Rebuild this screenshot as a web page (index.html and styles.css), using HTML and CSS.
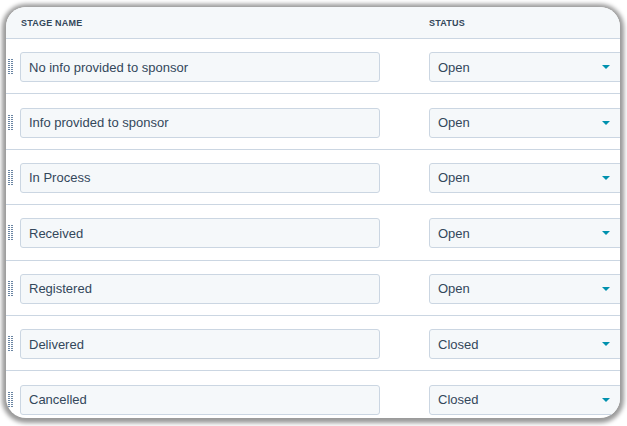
FILE: index.html
```html
<!DOCTYPE html>
<html lang="en">
<head>
  <meta charset="UTF-8" />
  <title>Pipeline stages</title>
  <link rel="stylesheet" href="styles.css">
</head>
<body>

<div class="card">
  <div class="head">
    <div class="col-name">Stage name</div>
    <div class="col-status">Status</div>
  </div>

  <div class="row">
    <span class="grip"></span>
    <div class="field">No info provided to sponsor</div>
    <div class="select">Open<span class="caret"></span></div>
  </div>
  <div class="row">
    <span class="grip"></span>
    <div class="field">Info provided to sponsor</div>
    <div class="select">Open<span class="caret"></span></div>
  </div>
  <div class="row">
    <span class="grip"></span>
    <div class="field">In Process</div>
    <div class="select">Open<span class="caret"></span></div>
  </div>
  <div class="row">
    <span class="grip"></span>
    <div class="field">Received</div>
    <div class="select">Open<span class="caret"></span></div>
  </div>
  <div class="row">
    <span class="grip"></span>
    <div class="field">Registered</div>
    <div class="select">Open<span class="caret"></span></div>
  </div>
  <div class="row">
    <span class="grip"></span>
    <div class="field">Delivered</div>
    <div class="select">Closed<span class="caret"></span></div>
  </div>
  <div class="row">
    <span class="grip"></span>
    <div class="field">Cancelled</div>
    <div class="select">Closed<span class="caret"></span></div>
  </div>
</div>

</body>
</html>
```
FILE: styles.css
```css
body {
  margin: 0;
  padding: 7px 7px 8px 6px;
  background: #fff;
  font-family: "Liberation Sans", Arial, sans-serif;
  color: #33475b;
}
.card {
  width: 614px;
  height: 411px;
  border-radius: 20px;
  overflow: hidden;
  background: #fff;
  box-shadow: 0 1px 4px 4px rgba(0,0,0,0.4);
}
.head {
  display: flex;
  align-items: center;
  height: 31px;
  background: #f5f8fa;
  border-bottom: 1px solid #cbd6e2;
  font-size: 9px;
  font-weight: bold;
  text-transform: uppercase;
  letter-spacing: 0.2px;
}
.col-name {
  width: 408px;
  padding-left: 15px;
}
.row {
  box-sizing: border-box;
  display: flex;
  align-items: center;
  height: 55.4px;
  border-bottom: 1px solid #cbd6e2;
  padding-top: 2px;
}
.grip {
  flex-shrink: 0;
  width: 5px;
  height: 16px;
  margin: 0 7px 0 2px;
  background-image:
    linear-gradient(to right, transparent 2px, #fff 2px 3px, transparent 3px),
    repeating-linear-gradient(to bottom, #6a85a3 0 1px, transparent 1px 2px);
}
.field, .select {
  box-sizing: border-box;
  flex-shrink: 0;
  height: 30px;
  display: flex;
  align-items: center;
  padding-left: 8px;
  background: #f5f8fa;
  border: 1px solid #cbd6e2;
  border-radius: 3px;
  font-size: 13px;
}
.field {
  width: 360px;
  margin-right: 49px;
}
.select {
  position: relative;
  width: 196px;
}
.caret {
  position: absolute;
  right: 14px;
  top: 12px;
  border-left: 4px solid transparent;
  border-right: 4px solid transparent;
  border-top: 4px solid #0091ae;
}
```
